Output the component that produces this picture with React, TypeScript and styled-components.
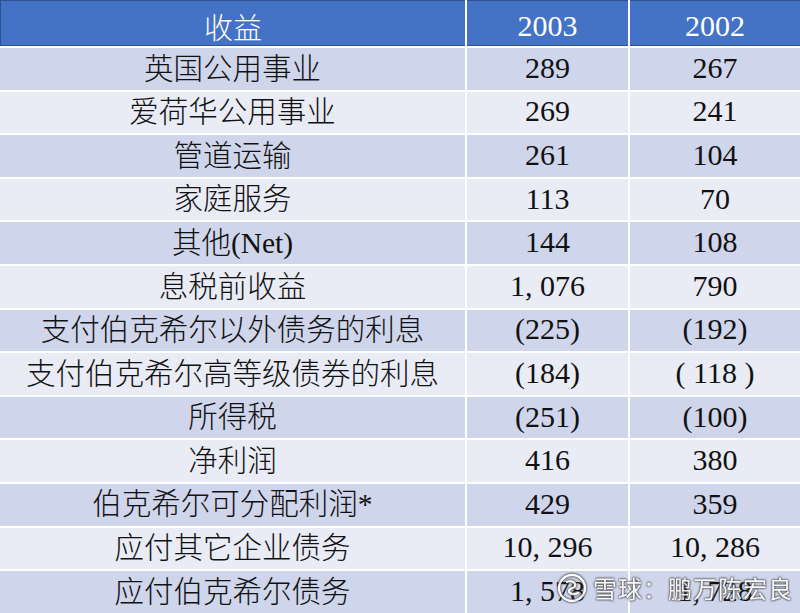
import styled, { createGlobalStyle } from "styled-components";

const GlobalStyle = createGlobalStyle`
  html, body {
    margin: 0;
    padding: 0;
    background: #ffffff;
    overflow: hidden;
  }
`;

const serif = `"Liberation Serif", "Times New Roman", serif`;
const cjk = `"Noto Sans CJK SC", sans-serif`;
const mixed = `"Liberation Serif", "Noto Sans CJK SC", sans-serif`;

type Row = { label: string; y2003: string; y2002: string };

const rows: Row[] = [
  { label: "英国公用事业", y2003: "289", y2002: "267" },
  { label: "爱荷华公用事业", y2003: "269", y2002: "241" },
  { label: "管道运输", y2003: "261", y2002: "104" },
  { label: "家庭服务", y2003: "113", y2002: "70" },
  { label: "其他(Net)", y2003: "144", y2002: "108" },
  { label: "息税前收益", y2003: "1, 076", y2002: "790" },
  { label: "支付伯克希尔以外债务的利息", y2003: "(225)", y2002: "(192)" },
  { label: "支付伯克希尔高等级债券的利息", y2003: "(184)", y2002: "( 118 )" },
  { label: "所得税", y2003: "(251)", y2002: "(100)" },
  { label: "净利润", y2003: "416", y2002: "380" },
  { label: "伯克希尔可分配利润*", y2003: "429", y2002: "359" },
  { label: "应付其它企业债务", y2003: "10, 296", y2002: "10, 286" },
  { label: "应付伯克希尔债务", y2003: "1, 578", y2002: "1, 728" },
];

const App: React.FC = () => {
  return (
    <>
      <GlobalStyle />
      <Page>
        <Table>
          <HeadCell>收益</HeadCell>
          <HeadCell $num>2003</HeadCell>
          <HeadCell $num>2002</HeadCell>
          {rows.map((r, i) => (
            <Line key={r.label} $odd={i % 2 === 0}>
              <LabelCell>{r.label}</LabelCell>
              <NumCell>{r.y2003}</NumCell>
              <NumCell>{r.y2002}</NumCell>
            </Line>
          ))}
        </Table>
        <Watermark>
          <svg width="30" height="30" viewBox="0 0 30 30">
            <circle cx="15" cy="15" r="13" fill="none" stroke="#fff" strokeWidth="2.4" />
            <path
              d="M10 9 C14 7 19 9 18 13 C17 16 12 15 12 18 C12 21 17 22 21 20"
              fill="none"
              stroke="#fff"
              strokeWidth="2.4"
              strokeLinecap="round"
            />
          </svg>
          <span>雪球：鹏万陈宏良</span>
        </Watermark>
      </Page>
    </>
  );
};

const Page = styled.div`
  position: relative;
  width: 800px;
  height: 613px;
  overflow: hidden;
  background: #ffffff;
`;

const Table = styled.div`
  display: grid;
  grid-template-columns: 465px 161px 1fr;
  grid-template-rows: 46px;
  grid-auto-rows: 41.6px;
  column-gap: 2px;
  row-gap: 2px;
  background: #ffffff;
`;

const HeadCell = styled.div<{ $num?: boolean }>`
  display: flex;
  align-items: flex-end;
  justify-content: center;
  padding-bottom: 4px;
  box-sizing: border-box;
  background: #4472c4;
  border-top: 1px solid #2f528f;
  border-bottom: 1px solid #2f528f;
  color: #ffffff;
  font-family: ${(p) => (p.$num ? serif : cjk)};
  font-size: ${(p) => (p.$num ? "30px" : "29px")};
  font-weight: ${(p) => (p.$num ? 400 : 300)};
  line-height: 30px;
  &:first-child {
    border-left: 1px solid #2f528f;
  }
`;

const Line = styled.div<{ $odd: boolean }>`
  display: contents;
  & > div {
    background: ${(p) => (p.$odd ? "#cfd5ea" : "#e9ebf5")};
  }
`;

const LabelCell = styled.div`
  display: flex;
  align-items: center;
  justify-content: center;
  padding-top: 1px;
  box-sizing: border-box;
  color: #111111;
  font-family: ${mixed};
  font-size: 29.5px;
  font-weight: 300;
  line-height: 1;
  white-space: nowrap;
`;

const NumCell = styled.div`
  display: flex;
  align-items: center;
  justify-content: center;
  padding-bottom: 2px;
  box-sizing: border-box;
  color: #111111;
  font-family: ${serif};
  font-size: 30px;
  font-weight: 400;
  line-height: 1;
  white-space: pre;
`;

const Watermark = styled.div`
  position: absolute;
  left: 557px;
  top: 573px;
  display: flex;
  align-items: center;
  gap: 6px;
  opacity: 0.88;
  filter: drop-shadow(0 0 1px #444) drop-shadow(0 0 0.5px #333);
  span {
    color: #ffffff;
    font-family: ${cjk};
    font-size: 24px;
    font-weight: 400;
    line-height: 1;
    letter-spacing: 1px;
  }
`;

export default App;
